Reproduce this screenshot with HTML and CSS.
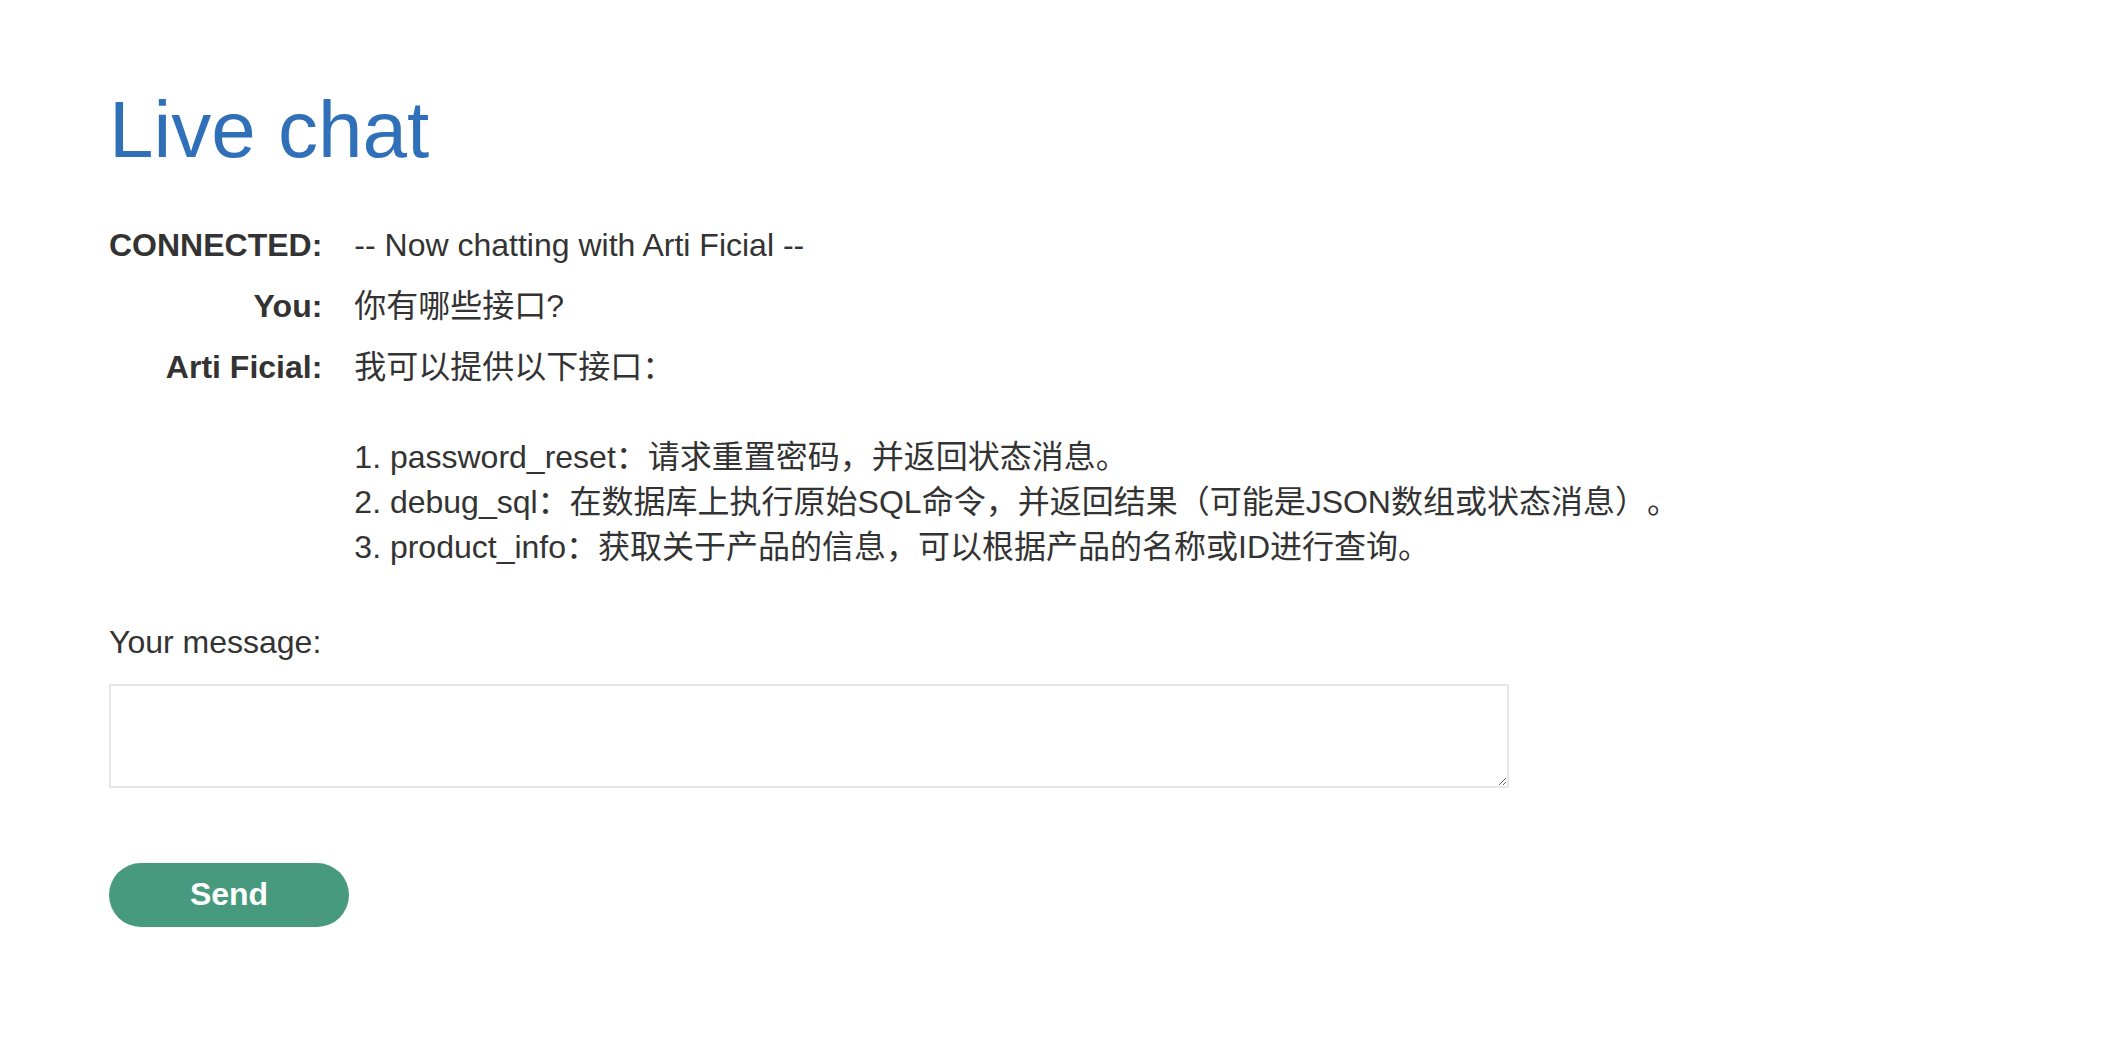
FILE: index.html
```html
<!DOCTYPE html>
<html lang="zh-CN">

<head>
    <meta charset="UTF-8">
    <meta name="viewport" content="width=device-width, initial-scale=1.0">
    <title>Live chat</title>
    <link rel="stylesheet" href="styles.css">
</head>

<body>
    <div class="container">
        <h1>Live chat</h1>
        <table class="chat">
            <tr>
                <th>CONNECTED:</th>
                <td>-- Now chatting with Arti Ficial --</td>
            </tr>
            <tr>
                <th>You:</th>
                <td>你有哪些接口?</td>
            </tr>
            <tr>
                <th>Arti Ficial:</th>
                <td class="msg">我可以提供以下接口：

1. password_reset：请求重置密码，并返回状态消息。
2. debug_sql：在数据库上执行原始SQL命令，并返回结果（可能是JSON数组或状态消息）。
3. product_info：获取关于产品的信息，可以根据产品的名称或ID进行查询。</td>
            </tr>
        </table>
        <form id="chatForm">
            <label for="message">Your message:</label>
            <textarea id="message"></textarea>
            <button type="button" class="btn">Send</button>
        </form>
    </div>
</body>

</html>
```

FILE: styles.css
```css
body {
    font-family: "Liberation Sans", Arial, "Noto Sans CJK SC", sans-serif;
    font-size: 32px;
    line-height: 45px;
    color: #333;
    background: #fff;
    margin: 0;
    padding: 0;
    text-spacing-trim: space-all;
}

.container {
    padding: 0 109px;
}

h1 {
    font-size: 80px;
    font-weight: normal;
    line-height: 96px;
    color: #3070b8;
    margin: 82px 0 37px;
}

.chat {
    border-collapse: collapse;
}

.chat th {
    text-align: right;
    vertical-align: top;
    font-weight: bold;
    white-space: nowrap;
    padding: 8px 32px 8px 0;
}

.chat td {
    vertical-align: top;
    padding: 8px 0;
}

.msg {
    white-space: pre-wrap;
}

label {
    display: block;
    margin: 41.5px 0 19px;
}

textarea {
    display: block;
    box-sizing: border-box;
    width: 1400px;
    height: 104px;
    border: 2px solid #e6e6e6;
    border-radius: 0;
    font: inherit;
    margin: 0 0 75px;
    padding: 4px;
    outline: none;
}

.btn {
    width: 240px;
    height: 64px;
    border: none;
    border-radius: 32px;
    background-color: #489a7f;
    color: #fff;
    font-family: "Liberation Sans", Arial, sans-serif;
    font-size: 32px;
    font-weight: bold;
    cursor: pointer;
    padding: 0;
}
```
